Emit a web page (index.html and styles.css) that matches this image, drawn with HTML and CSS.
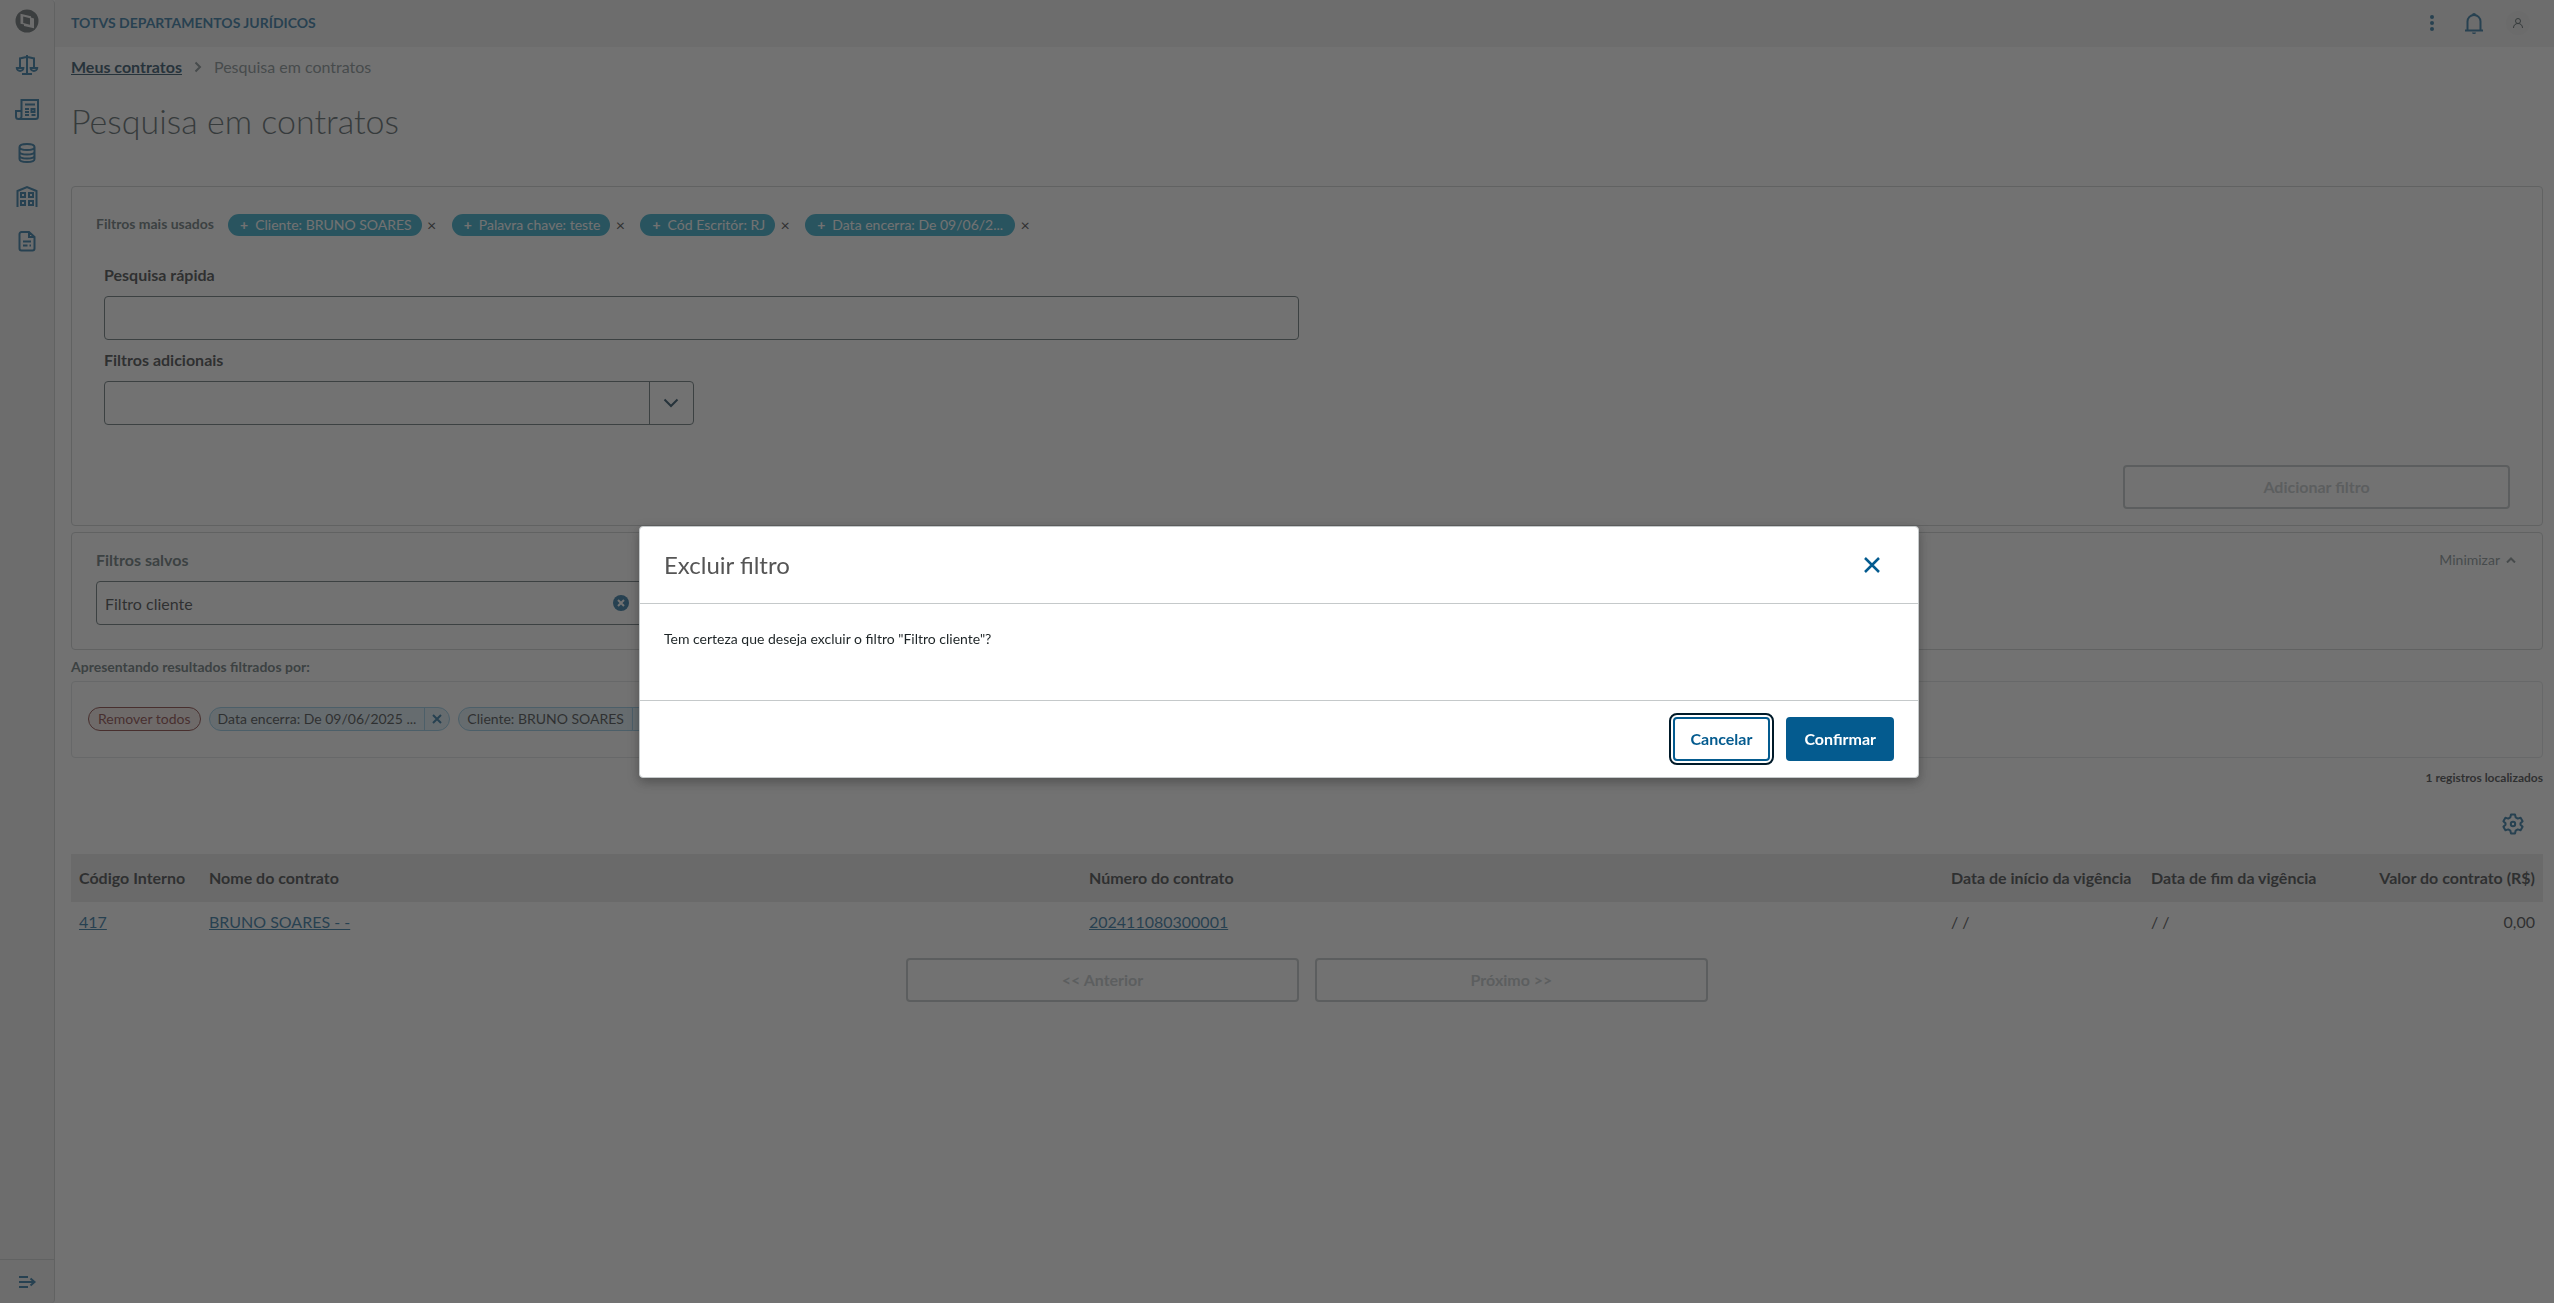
FILE: index.html
```html
<!DOCTYPE html>
<html lang="pt-BR">
<head>
  <meta charset="utf-8">
  <title>Pesquisa em contratos</title>
  <link rel="stylesheet" href="styles.css">
</head>
<body>
  <div class="app">
    <nav class="sidebar" aria-label="Menu">
      <svg class="logo" viewBox="0 0 24 24" width="24" height="24">
        <circle cx="12" cy="12" r="11.5" fill="#465054"/>
        <path d="M5.5 4.8 16 7.2V8.6L19 9.4V19.3L9 16.9V15.6L5.5 14.7Z" fill="#eeeeee"/>
        <path d="M8.2 7.6 15 9.3V15.8L8.2 14Z" fill="#465054"/>
      </svg>
      <a href="#" aria-label="Processos">
        <svg class="icon" viewBox="0 0 24 24">
          <path d="M12 2v19M7 21h10M4 5.5c3 0 5-1.5 8-1.5s5 1.5 8 1.5M5 5.5v9M19 5.5v9M1.8 15h6.6a3.3 3 0 0 1-6.6 0zM15.6 15h6.6a3.3 3 0 0 1-6.6 0z"/>
        </svg>
      </a>
      <a href="#" aria-label="Publicações">
        <svg class="icon" viewBox="0 0 24 24">
          <path d="M6.5 19V3h16.5v16.500a2.500 2.500 0 0 1-2.500 2.500H3.500A2.500 2.500 0 0 1 1 19.500V14h5.500v5.500a2.500 2.500 0 0 1-2.500 2.500M10 7.500h10M10 12h4M10 15h4M10 18h4M16.500 18h4M16.500 12h3v3h-3z"/>
        </svg>
      </a>
      <a href="#" aria-label="Cadastros">
        <svg class="icon" viewBox="0 0 24 24">
          <path d="M4.500 6c0-4 15-4 15 0v12c0 4-15 4-15 0zM4.500 6c0 4 15 4 15 0M4.500 10.500c0 4 15 4 15 0M4.500 14.500c0 4 15 4 15 0"/>
        </svg>
      </a>
      <a href="#" aria-label="Empresas">
        <svg class="icon" viewBox="0 0 24 24">
          <path d="M2.500 22V6L12 2l9.500 4v16M6 8h4v4H6zM14 8h4v4h-4zM6 16h4v4H6zM14 16h4v4h-4z"/>
        </svg>
      </a>
      <a href="#" aria-label="Contratos">
        <svg class="icon" viewBox="0 0 24 24">
          <path d="M14 3H6.500a2 2 0 0 0-2 2v14.500a2 2 0 0 0 2 2h11a2 2 0 0 0 2-2V8zM14 3v5h5.500M8 12.500h8M8 16.500h4.500M14.500 16.500h1.500"/>
        </svg>
      </a>
      <button class="sidebar-toggle" aria-label="Expandir menu">
        <svg class="icon" viewBox="0 0 24 24">
          <path d="M4 7h9M4 12h15M4 17h9M15.500 8.500 19.500 12l-4 3.500"/>
        </svg>
      </button>
    </nav>

    <div class="page">
      <header class="topbar">
        <span class="product">TOTVS DEPARTAMENTOS JURÍDICOS</span>
        <div class="topbar-actions">
          <button class="icon-button" aria-label="Mais opções">
            <svg viewBox="0 0 20 20" width="20" height="20" fill="#045b8f">
              <circle cx="10" cy="4" r="2"/><circle cx="10" cy="10" r="2"/><circle cx="10" cy="16" r="2"/>
            </svg>
          </button>
          <button class="icon-button" aria-label="Notificações">
            <svg viewBox="0 0 20 22" width="20" height="22">
              <path d="M1 18.500h18M3.500 18V9.500a6.500 6.500 0 0 1 13 0V18" fill="none" stroke="#045b8f" stroke-width="2"/>
              <path d="M8 3a2 2 0 0 1 4 0zM8 20.500h4a2 1.500 0 0 1-4 0z" fill="#045b8f"/>
            </svg>
          </button>
          <button class="avatar" aria-label="Usuário">
            <svg viewBox="0 0 12 12" width="12" height="12" fill="none" stroke="#37474b" stroke-width="1">
              <circle cx="6" cy="4" r="2.500"/><path d="M1.500 11c0-3 2-4.500 4.500-4.500s4.500 1.500 4.500 4.500"/>
            </svg>
          </button>
        </div>
      </header>

      <main class="content">
        <nav class="breadcrumb" aria-label="Navegação">
          <a href="#">Meus contratos</a>
          <svg viewBox="0 0 8 12" width="8" height="12"><path d="M1.500 1.500 6 6l-4.500 4.500"/></svg>
          <span>Pesquisa em contratos</span>
        </nav>
        <h1>Pesquisa em contratos</h1>

        <section class="panel search">
          <div class="most-used">
            <span class="most-used-label">Filtros mais usados</span>
            <button class="tag"><b>+</b>Cliente: BRUNO SOARES</button>
            <button class="tag-close" aria-label="Remover">×</button>
            <button class="tag"><b>+</b>Palavra chave: teste</button>
            <button class="tag-close" aria-label="Remover">×</button>
            <button class="tag"><b>+</b>Cód Escritór: RJ</button>
            <button class="tag-close" aria-label="Remover">×</button>
            <button class="tag tag-long"><b>+</b>Data encerra: De 09/06/2...</button>
            <button class="tag-close" aria-label="Remover">×</button>
          </div>
          <div class="field col-6">
            <label for="quick">Pesquisa rápida</label>
            <input type="text" id="quick">
          </div>
          <div class="field col-3">
            <label for="extra">Filtros adicionais</label>
            <div class="combo">
              <select id="extra"><option></option></select>
              <span class="combo-arrow">
                <svg viewBox="0 0 16 10" width="16" height="10"><path d="M1.500 1.500 8 8l6.500-6.500"/></svg>
              </span>
            </div>
          </div>
          <div class="add-filter">
            <button class="button button-disabled" disabled>Adicionar filtro</button>
          </div>
        </section>

        <section class="panel saved">
          <div class="saved-head">
            <label for="saved">Filtros salvos</label>
            <button class="minimize">Minimizar
              <svg viewBox="0 0 10 6" width="10" height="6"><path d="M1 5.500 5 1.500l4 4"/></svg>
            </button>
          </div>
          <div class="combo saved-combo">
            <input type="text" id="saved" value="Filtro cliente">
            <button class="clear" aria-label="Limpar">
              <svg viewBox="0 0 16 16" width="16" height="16">
                <circle cx="8" cy="8" r="8" fill="#045b8f"/>
                <path d="m5 5 6 6M11 5l-6 6" stroke="#fff" stroke-width="2"/>
              </svg>
            </button>
            <span class="combo-arrow">
              <svg viewBox="0 0 16 10" width="16" height="10"><path d="M1.500 1.500 8 8l6.500-6.500"/></svg>
            </span>
          </div>
        </section>

        <h2 class="applied-title">Apresentando resultados filtrados por:</h2>
        <section class="panel applied">
          <button class="chip chip-danger">Remover todos</button>
          <span class="chip"><span class="chip-text">Data encerra: De 09/06/2025 ...</span><button aria-label="Remover Data encerra"><svg viewBox="0 0 10 10" width="10" height="10"><path d="m1 1 8 8M9 1 1 9"/></svg></button></span>
          <span class="chip"><span class="chip-text">Cliente: BRUNO SOARES</span><button aria-label="Remover Cliente"><svg viewBox="0 0 10 10" width="10" height="10"><path d="m1 1 8 8M9 1 1 9"/></svg></button></span>
        </section>

        <p class="count">1 registros localizados</p>
        <div class="table-tools">
          <button class="icon-button" aria-label="Configurar colunas">
            <svg class="icon" viewBox="0 0 24 24">
              <path d="M10 2.500h4l.700 2.900 2 1.200 2.900-.800 2 3.400-2.100 2.100v1.400l2.100 2.100-2 3.400-2.900-.800-2 1.200-.700 2.900h-4l-.700-2.900-2-1.200-2.900.800-2-3.400 2.100-2.100v-1.400L2.400 9.200l2-3.400 2.900.800 2-1.200z" stroke-linejoin="round"/>
              <circle cx="12" cy="12" r="2.200"/>
            </svg>
          </button>
        </div>

        <table class="contracts">
          <colgroup>
            <col class="col-code"><col class="col-name"><col><col class="col-date"><col class="col-date"><col class="col-value">
          </colgroup>
          <thead>
            <tr>
              <th>Código Interno</th>
              <th>Nome do contrato</th>
              <th>Número do contrato</th>
              <th>Data de início da vigência</th>
              <th>Data de fim da vigência</th>
              <th class="number">Valor do contrato (R$)</th>
            </tr>
          </thead>
          <tbody>
            <tr>
              <td><a href="#">417</a></td>
              <td><a href="#">BRUNO SOARES - -</a></td>
              <td><a href="#">202411080300001</a></td>
              <td>/ /</td>
              <td>/ /</td>
              <td class="number">0,00</td>
            </tr>
          </tbody>
        </table>

        <div class="pager">
          <button class="button button-disabled" disabled>&lt;&lt; Anterior</button>
          <button class="button button-disabled" disabled>Próximo &gt;&gt;</button>
        </div>
      </main>
    </div>
  </div>

  <div class="overlay">
    <div class="modal" role="dialog" aria-modal="true" aria-labelledby="modalTitle">
      <div class="modal-header">
        <h2 id="modalTitle">Excluir filtro</h2>
        <button class="icon-button" aria-label="Fechar">
          <svg viewBox="0 0 16 16" width="16" height="16"><path d="m1 1 14 14M15 1 1 15" stroke="#045b8f" stroke-width="2.500"/></svg>
        </button>
      </div>
      <div class="modal-body">Tem certeza que deseja excluir o filtro "Filtro cliente"?</div>
      <div class="modal-footer">
        <button class="button button-secondary">Cancelar</button>
        <button class="button button-primary">Confirmar</button>
      </div>
    </div>
  </div>
</body>
</html>
```
FILE: styles.css
```css
* {
  box-sizing: border-box;
}

body {
  margin: 0;
  background: #fff;
  color: #1d2426;
  font-family: Lato, "Open Sans", sans-serif;
  font-size: 16px;
  line-height: 24px;
}

button, input, select {
  margin: 0;
  padding: 0;
  border: none;
  background: none;
  color: inherit;
  font: inherit;
}

button {
  cursor: pointer;
}

svg {
  display: block;
}

h1, h2, p {
  margin: 0;
}

a {
  color: #045b8f;
}

.icon {
  width: 24px;
  height: 24px;
  fill: none;
  stroke: #045b8f;
  stroke-width: 2;
}

.icon-button {
  display: flex;
}

.app {
  display: flex;
  min-height: 100vh;
}

/* sidebar */
.sidebar {
  display: flex;
  flex-direction: column;
  align-items: center;
  gap: 20px;
  width: 55px;
  padding-top: 9px;
  background: #eeeeee;
  border-right: 1px solid #c5c9ca;
  border-radius: 0 4px 4px 0;
}

.sidebar-toggle {
  display: flex;
  justify-content: center;
  align-items: center;
  align-self: stretch;
  height: 44px;
  margin-top: auto;
  border-top: 1px solid #c5c9ca;
}

.page {
  flex: 1;
  min-width: 0;
}

/* top bar */
.topbar {
  display: flex;
  justify-content: space-between;
  align-items: center;
  height: 47px;
  padding: 0 24px 2px 16px;
  background: #eeeeee;
}

.product {
  color: #045b8f;
  font-size: 14px;
  font-weight: bold;
}

.topbar-actions {
  display: flex;
  align-items: center;
  gap: 22px;
}

.avatar {
  display: flex;
  justify-content: center;
  align-items: center;
  width: 24px;
  height: 24px;
  border-radius: 50%;
  background: #e6e6e6;
}

/* content */
.content {
  padding: 8px 11px 24px 16px;
}

.breadcrumb {
  display: flex;
  align-items: center;
  gap: 12px;
  color: #6e7c7f;
}

.breadcrumb a {
  color: #002c47;
  font-weight: bold;
}

.breadcrumb svg, .minimize svg {
  fill: none;
  stroke: #6e7c7f;
  stroke-width: 2;
}

h1 {
  margin: 20px 0 43px;
  color: #37474b;
  font-size: 34px;
  font-weight: 300;
  line-height: 44px;
}

.panel {
  border: 1px solid #c5c9ca;
  border-radius: 4px;
}

.search {
  padding: 26px 24px 16px;
}

.most-used {
  display: flex;
  align-items: center;
  margin-bottom: 26px;
  font-size: 14px;
  line-height: 22px;
}

.most-used-label {
  width: 132px;
  padding-bottom: 2px;
  color: #4a5c60;
  font-weight: bold;
}

.tag {
  height: 22px;
  padding: 0 10px 0 12px;
  border-radius: 11px;
  background: #0c9abe;
  color: #fff;
}

.tag b {
  margin-right: 7px;
}

.tag-long {
  width: 210px;
  text-align: left;
}

.tag-close {
  width: 20px;
  margin-right: 10px;
  font-size: 16px;
}

.field {
  margin-bottom: 8px;
  padding: 0 8px;
}

.col-6 {
  width: 50%;
}

.col-3 {
  width: 25%;
}

.field label {
  display: block;
  margin-bottom: 9px;
  font-weight: bold;
}

.field input {
  display: block;
  width: 100%;
  height: 44px;
  padding: 0 8px;
  border: 1px solid #4a5c60;
  border-radius: 4px;
}

.combo {
  display: flex;
  align-items: center;
  height: 44px;
  border: 1px solid #4a5c60;
  border-radius: 4px;
}

.combo select, .combo input {
  flex: 1;
  height: 100%;
  padding: 0 8px;
  appearance: none;
}

.combo-arrow {
  display: flex;
  justify-content: center;
  align-items: center;
  width: 44px;
  height: 100%;
  border-left: 1px solid #4a5c60;
}

.combo-arrow svg {
  fill: none;
  stroke: #002c47;
  stroke-width: 2;
}

.add-filter {
  display: flex;
  justify-content: flex-end;
  padding: 32px 8px 0;
}

.add-filter .button {
  width: calc(100% / 6 - 14px);
}

.button {
  height: 44px;
  padding: 0 16px;
  border: 2px solid #045b8f;
  border-radius: 4px;
  font-weight: bold;
}

.button-disabled {
  border-color: #b6bdbf;
  color: #b6bdbf;
  cursor: default;
}

.button-secondary {
  color: #045b8f;
  outline: 2px solid #001a29;
  outline-offset: 2px;
}

.button-primary {
  background: #045b8f;
  color: #fff;
}

.saved {
  margin-top: 6px;
  padding: 15px 24px 24px;
}

.saved-head {
  display: flex;
  justify-content: space-between;
  margin-bottom: 9px;
}

.saved-head label {
  color: #4a5c60;
  font-weight: bold;
}

.minimize {
  display: flex;
  align-items: center;
  gap: 6px;
  padding-right: 2px;
  color: #6e7c7f;
  font-size: 14px;
}

.saved-combo {
  width: 25%;
}

.clear {
  margin-right: 28px;
}

.applied-title {
  margin: 6px 0 4px;
  color: #4a5c60;
  font-size: 14px;
  line-height: 21px;
}

.applied {
  display: flex;
  gap: 8px;
  padding: 25px 16px 26px;
  border-color: #dadedf;
}

.chip {
  display: flex;
  height: 24px;
  border: 1px solid #7fbfe0;
  border-radius: 12px;
  background: #d5ebf5;
  font-size: 14px;
  line-height: 22px;
}

.chip-text {
  padding: 0 8px;
}

.chip button {
  display: flex;
  justify-content: center;
  align-items: center;
  width: 25px;
  border-left: 1px solid #7fbfe0;
}

.chip svg {
  fill: none;
  stroke: #045b8f;
  stroke-width: 2;
}

.chip-danger {
  padding: 0 9px;
  border-color: #72211d;
  background: #f2e4e2;
  color: #72211d;
}

.count {
  margin-top: 11px;
  font-size: 12px;
  font-weight: bold;
  line-height: 18px;
  text-align: right;
}

.table-tools {
  display: flex;
  justify-content: flex-end;
  padding: 25px 18px 18px;
}

.contracts {
  width: 100%;
  border-collapse: collapse;
  table-layout: fixed;
}

.contracts th, .contracts td {
  height: 40px;
  padding: 0 8px;
  text-align: left;
}

.contracts th {
  height: 48px;
  background: #e3e3e3;
}

.contracts .number {
  text-align: right;
}

.col-code {
  width: 130px;
}

.col-name {
  width: 880px;
}

.col-date {
  width: 200px;
}

.col-value {
  width: 200px;
}

.pager {
  display: grid;
  grid-template-columns: repeat(2, calc(100% / 6 - 19px));
  justify-content: center;
  gap: 16px;
  padding-top: 16px;
}

/* dialog */
.overlay {
  position: fixed;
  inset: 0;
  display: flex;
  justify-content: center;
  align-items: center;
  padding-left: 4px;
  background: rgba(54, 54, 54, 0.7);
}

.modal {
  width: 1280px;
  max-width: 90%;
  border: 1px solid #c5c9ca;
  border-radius: 4px;
  background: #fff;
  box-shadow: 0 4px 12px rgba(0, 0, 0, 0.3);
}

.modal-header, .modal-footer {
  display: flex;
  align-items: center;
  height: 77px;
  padding: 0 24px;
}

.modal-header {
  justify-content: space-between;
  padding-right: 38px;
  border-bottom: 1px solid #c5c9ca;
}

.modal-header h2 {
  color: #555;
  font-size: 24px;
  font-weight: normal;
}

.modal-body {
  height: 96px;
  padding: 23px 24px;
  font-size: 14px;
}

.modal-footer {
  justify-content: flex-end;
  gap: 16px;
  border-top: 1px solid #c5c9ca;
}
```
